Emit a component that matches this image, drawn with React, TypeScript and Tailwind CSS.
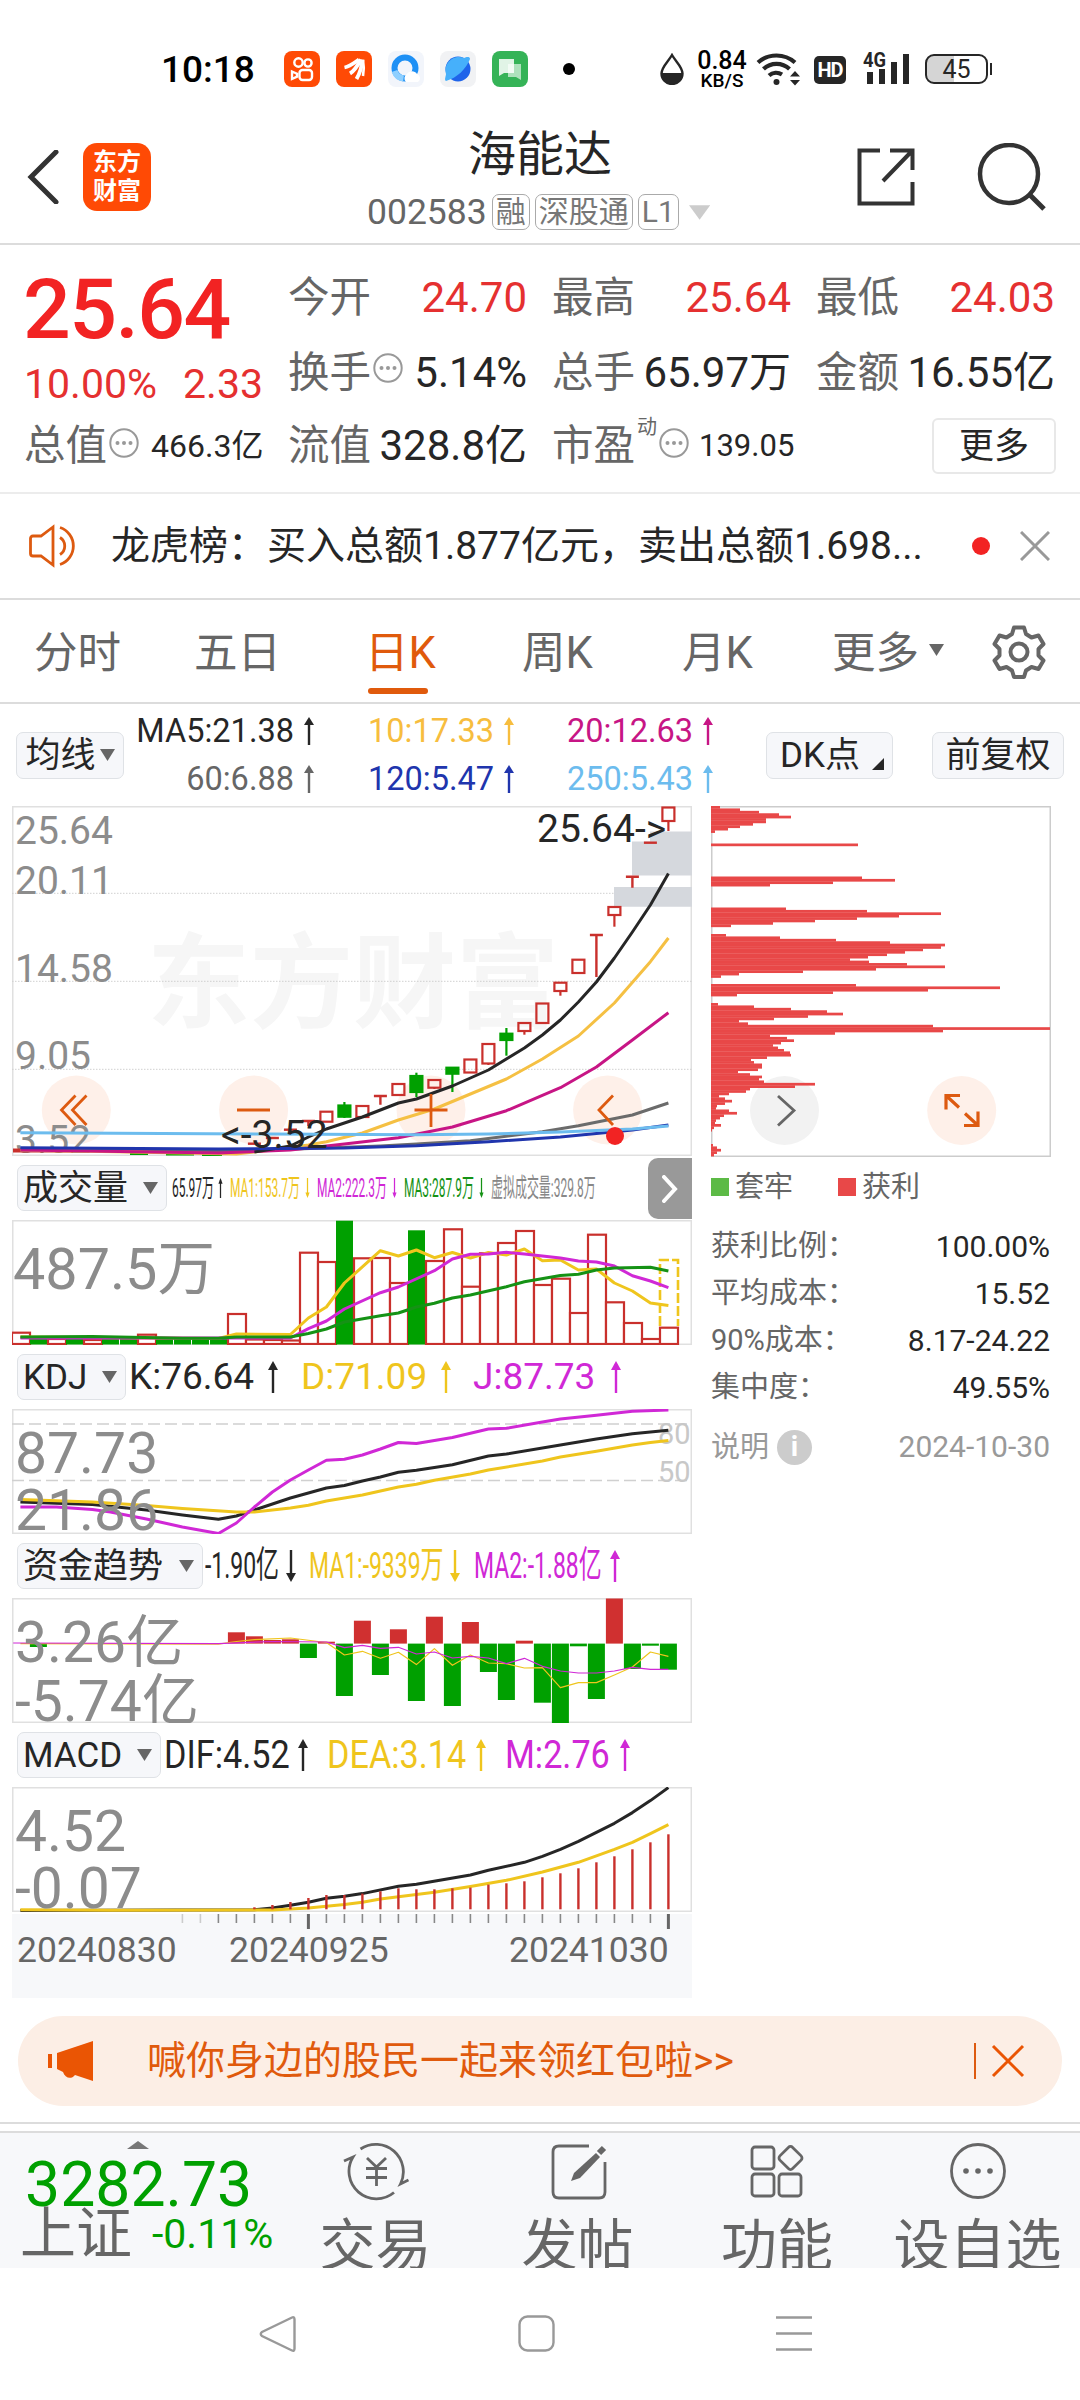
import type { ReactNode } from "react";

type Point = [number, number];

const RED = "#c9302c";
const GREEN = "#00a000";
const YELLOW = "#efc51d";
const PURPLE = "#d028d6";

// Centre of the i-th day inside a 680px wide panel
const cx = (i: number) => 8.4 + i * 18;
const toPoints = (pts: Point[]) => pts.map(([i, y]) => `${cx(i)},${y}`).join(" ");

// [day, body top, body bottom, high, low, up]
const CANDLES: [number, number, number, number, number, boolean][] = [
  [17, 305.7, 315.7, 305, 316, true],
  [18, 299.5, 310.7, 296, 312, false],
  [19, 300, 311, 300, 311, true],
  [21, 278, 289, 278, 290, true],
  [22, 270, 286, 266.7, 291, false],
  [23, 274, 281.7, 273, 283, true],
  [24, 261.7, 267.7, 261, 286, false],
  [25, 253.5, 266.5, 253, 267, true],
  [26, 238, 257.5, 238, 259, true],
  [27, 227.7, 234, 222, 249.7, false],
  [28, 217, 225, 217, 228.7, true],
  [29, 197.5, 217, 197, 217, true],
  [30, 176.7, 185, 176, 189.7, true],
  [31, 153.7, 167, 153, 167, true],
  [33, 101, 109, 100, 120.7, true],
  [36, 1.5, 15, 1, 25, true],
];

// Limit-up days drawn as a dash with an optional tail: [day, y, low]
const DASHES: [number, number, number][] = [
  [13, 337.7, 337.7],
  [14, 332, 332],
  [15, 323.7, 323.7],
  [16, 315, 320],
  [20, 290, 298.7],
  [32, 129, 171],
  [34, 70.7, 81.7],
  [35, 36.7, 36.7],
];

const MA_LINES: { color: string; pts: Point[] }[] = [
  { color: "#6b6b6b", pts: [[0, 344], [12, 345], [20, 340], [22, 338], [25, 334.7], [29, 325.7], [31, 319.7], [34, 309], [36, 297]] },
  { color: "#f5c043", pts: [[0, 344], [12, 348], [14, 344], [16, 339], [17, 335.7], [19, 327], [21, 314], [23, 303], [25, 288], [27, 273], [29, 253], [31, 230], [33, 197], [35, 155.7], [36, 132]] },
  { color: "#c71585", pts: [[0, 344], [11, 347], [15, 344], [18, 338], [21, 331.7], [24, 321], [27, 304.7], [30, 281.7], [32, 261], [34, 234], [36, 206.7]] },
  { color: "#262626", pts: [[13, 346], [15, 340], [16, 331], [17, 323], [19, 311], [21, 297], [22, 293], [24, 280], [26, 264], [28, 242], [29, 229], [30, 214], [31, 196], [32, 176], [33, 152], [34, 126], [35, 99], [36, 67.5]] },
  { color: "#2035ad", pts: [[0, 341.7], [11, 343], [18, 342], [22, 339.7], [26, 335.7], [30, 331], [34, 324], [36, 319]] },
  { color: "#6cbcee", pts: [[0, 326.7], [14, 328], [22, 328.7], [26, 328], [30, 326], [34, 323], [36, 320]] },
];

const VOLUME_TOPS = [
  112.7, 119, 119, 119, 120, 119, 119, 114.7, 119, 119, 119, 119, 94, 119.5, 120, 120.5, 32.7, 42, 0.7, 38.3, 38, 63, 10.3,
  41, 9.3, 66.7, 33.3, 23, 11, 65, 58.7, 93, 14.7, 82.3, 103, 119, 107.7,
];
const VOLUME_DOWN = [1, 3, 5, 6, 8, 9, 10, 11, 18, 22];

const VOLUME_LINES: { color: string; pts: Point[] }[] = [
  { color: YELLOW, pts: [[0, 117], [11, 118.5], [12, 114], [15, 114.5], [16, 98], [17, 87], [18, 63], [20, 30.7], [21, 36], [22, 30], [23, 37.7], [24, 32.5], [25, 38], [26, 32.5], [27, 35], [28, 29], [29, 40.7], [30, 40], [31, 50], [32, 49], [33, 63], [34, 71], [35, 83], [36, 85.5]] },
  { color: PURPLE, pts: [[0, 118], [15, 118], [16, 108.7], [17, 101], [18, 89], [20, 72.7], [21, 67], [23, 50.7], [24, 39], [25, 34.3], [26, 34], [27, 32.3], [28, 34], [30, 38], [31, 41], [32, 42], [33, 46], [34, 55.7], [35, 61], [36, 67.7]] },
  { color: "#159215", pts: [[0, 117], [4, 116.5], [9, 118.3], [11, 118.3], [12, 117], [15, 117], [16, 113.5], [17, 109], [18, 102], [20, 95.7], [21, 93], [22, 87], [23, 83.3], [24, 78], [25, 75], [27, 66.7], [28, 61.7], [30, 55.5], [31, 54.3], [32, 50], [33, 48], [35, 47.3], [36, 51]] },
];

const KDJ_LINES: { color: string; pts: Point[] }[] = [
  { color: "#262626", pts: [[0, 93], [4, 95.5], [7, 101], [9, 106], [11, 110.3], [12, 107], [13, 101], [15, 89], [17, 79], [18, 76.5], [19, 72], [20, 68], [21, 63.3], [22, 61.3], [24, 55.7], [26, 47], [27, 45], [30, 36], [32, 30], [34, 24.7], [36, 21.3]] },
  { color: YELLOW, pts: [[0, 90.5], [4, 93], [7, 96.5], [9, 99.5], [12, 103], [13, 103], [15, 99], [16, 96.3], [17, 92], [19, 86], [21, 78], [22, 75.3], [23, 71.3], [25, 65], [26, 61], [29, 52], [30, 48], [32, 42.3], [34, 36], [35, 33.6], [36, 31.6]] },
  { color: PURPLE, pts: [[0, 98], [2, 98], [4, 100.5], [5, 103], [7, 110], [9, 118], [11, 124.5], [12, 114], [13, 98], [14, 83], [15, 71], [16, 61], [17, 51.3], [18, 50.3], [19, 46], [20, 40], [21, 33.5], [22, 34.5], [24, 28.5], [26, 20], [27, 19.3], [29, 13], [30, 10], [32, 6.3], [34, 2.3], [36, 1]] },
];

// [day, end of bar], bars start at the zero line
const FLOW_BARS: Point[] = [
  [1, 49], [12, 34.3], [13, 38.3], [14, 42], [15, 41.3], [16, 60], [17, 43.7], [18, 98], [19, 22.7], [20, 77], [21, 31.3],
  [22, 103], [23, 18.7], [24, 108], [25, 24], [26, 74], [27, 102], [28, 42.7], [29, 104.7], [30, 125], [31, 48.3], [32, 101],
  [33, 0.5], [34, 71], [35, 47.7], [36, 71.7],
];
const FLOW_ZERO = 45.6;

const FLOW_LINES: { color: string; pts: Point[] }[] = [
  { color: YELLOW, pts: [[0, 45.6], [11, 46.2], [12, 43.5], [13, 41.6], [15, 40], [17, 44.5], [18, 57], [19, 53.3], [20, 60.3], [21, 54.3], [22, 66.6], [23, 50.6], [24, 67.3], [25, 57], [26, 65], [27, 65.7], [28, 70], [29, 69.7], [30, 89.6], [31, 84.6], [32, 84.6], [33, 77], [34, 69], [35, 54], [36, 58.3]] },
  { color: PURPLE, pts: [[-0.4, 45], [11, 45.6], [14, 43.5], [17, 44], [18, 49.6], [19, 47.3], [20, 50.3], [21, 49.3], [22, 56], [23, 54], [24, 60], [25, 58.3], [26, 60], [27, 65.6], [28, 60.3], [29, 68.3], [30, 73], [31, 75], [32, 75], [33, 73], [34, 69.3], [35, 71.3], [36, 71.3]] },
];

// MACD histogram from day 13 on
const MACD_TOPS = [
  120.3, 118, 115, 111, 108, 108, 106.6, 104.3, 101.3, 102.3, 102.3, 101.3, 100.6, 97.6, 96.3, 94.3, 90.3, 86.3, 81.3, 75.3,
  69.3, 62.3, 55.3, 47.3,
];
const MACD_LINES: { color: string; pts: Point[] }[] = [
  { color: "#262626", pts: [[0, 123.5], [13, 122.8], [14, 121], [15, 118.3], [16, 115.3], [17, 111.3], [18, 109.3], [19, 106.6], [21, 99.3], [22, 97.3], [25, 88], [26, 83.3], [28, 75.3], [29, 69.3], [30, 62.3], [31, 54.3], [32, 45.3], [33, 36.3], [34, 25.6], [35, 13.6], [36, 0.6]] },
  { color: YELLOW, pts: [[0, 122.8], [5, 123.3], [14, 123], [16, 121], [18, 117.5], [19, 115.3], [20, 112], [22, 107.6], [23, 105.3], [25, 99.6], [27, 93.3], [29, 85], [31, 75.3], [33, 62.3], [34, 55.3], [35, 46.6], [36, 37.6]] },
];

// Chip distribution, one width per price step
const CHIP_STEP = 2.42;
const CHIPS: { y: number; w: number[] }[] = [
  { y: 0, w: [9, 29, 48, 68, 80, 55, 55, 42, 29, 17, 4] },
  { y: 37.5, w: [147] },
  { y: 70.5, w: [151, 184, 122, 59] },
  { y: 101.5, w: [75, 156, 230, 188, 146, 104, 62, 20] },
  { y: 128, w: [15, 69, 125, 179, 234, 230, 212, 194, 176, 157, 139, 158, 196, 234, 165, 92, 28, 10] },
  { y: 178, w: [145, 289, 217, 122, 26] },
  { y: 197, w: [7, 43, 80, 116, 132, 97, 63, 28, 37, 222, 339, 232, 124, 59, 76, 83, 70, 62, 67, 73, 79, 80, 56, 40, 43, 51, 51, 47, 27, 39, 51, 48, 53, 104, 84, 39, 35, 18, 8, 14, 21, 14, 6, 5, 18, 26, 13, 9, 5, 4, 10, 3, 1] },
  { y: 338, w: [2, 6, 10, 6, 3] },
];

function Lines({ lines, width = 3 }: { lines: { color: string; pts: Point[] }[]; width?: number }) {
  return (
    <>
      {lines.map((l, idx) => (
        <polyline key={idx} points={toPoints(l.pts)} fill="none" stroke={l.color} strokeWidth={width} strokeLinejoin="round" />
      ))}
    </>
  );
}

function Panel({ height, children }: { height: number; children: ReactNode }) {
  return (
    <svg width="680" height={height} viewBox={`0 0 680 ${height}`} className="block shrink-0">
      <rect x="0.75" y="0.75" width="678.5" height={height - 1.5} fill="#fff" stroke="#e0e0e0" strokeWidth="1.5" />
      {children}
    </svg>
  );
}

function Caret({ className = "" }: { className?: string }) {
  return (
    <svg width="15" height="12" viewBox="0 0 15 12" className={`shrink-0 ${className}`}>
      <path d="M0 0h15L7.500 12z" fill="#666" />
    </svg>
  );
}

function Arrow({ down = false, className = "", small = false }: { down?: boolean; className?: string; small?: boolean }) {
  return (
    <svg
      width={small ? 5 : 12}
      height={small ? 20 : 32}
      viewBox="0 0 12 32"
      preserveAspectRatio="none"
      className={`shrink-0 ${down ? "rotate-180" : ""} ${className}`}
    >
      <path d="M6 3v29" stroke="currentColor" strokeWidth={small ? 3 : 2.4} />
      <path d="M6 0l5 9H1z" fill="currentColor" />
    </svg>
  );
}

function Dots({ className = "" }: { className?: string }) {
  return (
    <svg width="30" height="30" viewBox="0 0 30 30" className={`shrink-0 ${className}`}>
      <circle cx="15" cy="15" r="13.7" fill="none" stroke="#999" strokeWidth="2" />
      <circle cx="8.500" cy="15" r="2" fill="#999" />
      <circle cx="15" cy="15" r="2" fill="#999" />
      <circle cx="21.500" cy="15" r="2" fill="#999" />
    </svg>
  );
}

function StatusBar() {
  return (
    <div className="flex h-[138px] items-start pl-[161px] pt-[51px]">
      <div className="w-[123px] pt-[1px] text-[37px] leading-[36px] font-medium text-black">10:18</div>
      <div className="flex gap-4">
        <svg width="36" height="36" viewBox="0 0 36 36">
          <rect width="36" height="36" rx="8" fill="#ff4a05" />
          <g fill="none" stroke="#fff" strokeWidth="2.4">
            <circle cx="14.500" cy="11.500" r="4.200" />
            <circle cx="24" cy="12" r="3.600" />
            <rect x="15.500" y="19" width="12.500" height="10" rx="3" />
            <path d="M8 20.500v7.500l5-2.300v-3z" />
          </g>
        </svg>
        <svg width="36" height="36" viewBox="0 0 36 36">
          <rect width="36" height="36" rx="8" fill="#ff4a05" />
          <g fill="none" stroke="#fff" strokeWidth="3.800">
            <path d="M8.500 16.500C14 15.500 18 12 23 8.500" />
            <path d="M14 22.500C19 19.500 22 14 25 8.500" />
            <path d="M20.500 28C24 22 26 15 26.500 8.500" />
            <path d="M27 25c1-5 1-11 0-16" strokeWidth="2.600" />
          </g>
        </svg>
        <svg width="36" height="36" viewBox="0 0 36 36">
          <rect width="36" height="36" rx="8" fill="#f2f5fb" />
          <circle cx="17" cy="17" r="10.500" fill="none" stroke="#1e90f5" strokeWidth="6" />
          <path d="M6.500 20a11 11 0 0 0 9 7.500" fill="none" stroke="#8fd0ff" strokeWidth="6" />
          <path d="M18 31a5 5 0 0 1 1-8 6 6 0 0 1 10 0 4.500 4.500 0 0 1 1 8z" fill="#fff" />
        </svg>
        <svg width="36" height="36" viewBox="0 0 36 36">
          <rect width="36" height="36" rx="8" fill="#f1f2f4" />
          <circle cx="18" cy="18" r="12.500" fill="#1f64ea" />
          <path d="M6 30c-2-1 0-5 0-7-3-11 8-20 18-16 2-1 6-2 6 1-4 10-13 19-24 22z" fill="#46b0fb" />
        </svg>
        <svg width="36" height="36" viewBox="0 0 36 36">
          <rect width="36" height="36" rx="8" fill="#35b357" />
          <path d="M16 13h13v16l-5-3h-8z" fill="#fff" opacity="0.6" />
          <path d="M7 8h15v14H12l-5 3z" fill="#fff" opacity="0.85" />
        </svg>
      </div>
      <div className="mt-3 ml-[35px] h-3 w-3 rounded-full bg-black" />
      <svg width="24" height="32" viewBox="0 0 24 32" className="mt-[2px] ml-[85px]">
        <path d="M12 2C8 9 1.500 14 1.500 20.500a10.500 10.500 0 0 0 21 0C22.500 14 16 9 12 2z" fill="none" stroke="#262626" strokeWidth="2.400" />
        <path d="M1.500 20h21a10.500 10.500 0 0 1-21 0z" fill="#262626" />
      </svg>
      <div className="ml-[12px] w-[52px] text-center font-medium text-black">
        <div className="text-[25px] leading-[20px]">0.84</div>
        <div className="text-[19px] leading-[20px]">KB/S</div>
      </div>
      <svg width="45" height="34" viewBox="0 0 45 34" className="mt-[1px] ml-[8px]">
        <g fill="none" stroke="#262626" strokeWidth="4.200">
          <path d="M2 10.500a28 28 0 0 1 37 0" />
          <path d="M7.500 17a19 19 0 0 1 26 0" />
          <path d="M13 23.500a11 11 0 0 1 13 -1" />
        </g>
        <circle cx="20.500" cy="30" r="3" fill="#262626" />
        <path d="M34 24.500l5-5.500 5 5.500zM34 28l5 5.500 5-5.500z" fill="#262626" />
      </svg>
      <div className="mt-[5px] ml-[13px] flex h-7 w-8 items-center justify-center rounded-[5px] bg-[#262626] text-[20px] leading-none font-bold tracking-tighter text-white">
        HD
      </div>
      <svg width="48" height="34" viewBox="0 0 48 34" className="ml-[17px]">
        <text x="0" y="16" fontSize="20" fontWeight="700" fill="#262626" textLength="23" lengthAdjust="spacingAndGlyphs">
          4G
        </text>
        <path d="M7 21v12M19 18v15M31 11v22M43 3v30" stroke="#262626" strokeWidth="6" />
      </svg>
      <div className="mt-[3px] ml-[14px] flex items-center">
        <div className="flex h-[30px] w-[63px] items-center justify-center rounded-[9px] border-2 border-[#262626] bg-linear-to-r from-[#d5d5d5] from-45% to-white to-45% text-[25px] leading-none text-[#262626]">
          45
        </div>
        <div className="ml-[2px] h-3 w-[2px] bg-[#262626]" />
      </div>
    </div>
  );
}

function Badge({ children }: { children: ReactNode }) {
  return (
    <span className="flex h-9 items-center rounded-[7px] border-[1.5px] border-[#aaa] px-[3px] text-[30px] leading-none text-[#777]">
      {children}
    </span>
  );
}

function Header() {
  return (
    <header className="flex h-[107px] items-start border-b-2 border-[#dcdcdc] pl-[27px]">
      <svg width="32" height="54" viewBox="0 0 32 54" className="mt-[12px]">
        <path d="M29 2L4 27l25 25" fill="none" stroke="#333" strokeWidth="5" strokeLinecap="round" />
      </svg>
      <div className="mt-[5px] ml-[24px] flex h-[68px] w-[68px] flex-col items-center justify-center rounded-[14px] bg-[#ff4a05] text-[24px] leading-[29px] font-bold text-white">
        <span>东方</span>
        <span>财富</span>
      </div>
      <div className="ml-[216px] w-[343px]">
        <h1 className="-mt-[7px] ml-[101px] text-[48px] leading-[48px] text-[#262626]">海能达</h1>
        <div className="mt-[15px] flex items-center gap-[5px] whitespace-nowrap">
          <span className="text-[35.5px] leading-9 text-[#666]">002583</span>
          <Badge>融</Badge>
          <Badge>深股通</Badge>
          <Badge>L1</Badge>
          <svg width="22" height="15" viewBox="0 0 22 15" className="ml-[5px]">
            <path d="M0 0h22L11 15z" fill="#ccc" />
          </svg>
        </div>
      </div>
      <svg width="58" height="58" viewBox="0 0 58 58" className="mt-[10px] ml-[147px]">
        <path d="M23 2.500H2.500v53h53V34M33 2.500h22.500V22M54 4L26 33" fill="none" stroke="#333" strokeWidth="4" />
      </svg>
      <svg width="70" height="70" viewBox="0 0 70 70" className="mt-[5px] ml-[62px]">
        <circle cx="32" cy="31" r="29" fill="none" stroke="#333" strokeWidth="4.500" />
        <path d="M53 52l14 14" stroke="#333" strokeWidth="5" />
      </svg>
    </header>
  );
}

function Quote({ label, value, up = false, extra }: { label: string; value: string; up?: boolean; extra?: ReactNode }) {
  return (
    <div className="flex w-[239px] items-center justify-between">
      <div className="flex items-center">
        <span className="text-[41.5px] leading-none text-[#666]">{label}</span>
        {extra}
      </div>
      <span className={`text-[42px] leading-none ${up ? "text-[#e53030]" : "text-[#262626]"}`}>{value}</span>
    </div>
  );
}

function QuotePanel() {
  return (
    <section className="h-[249px] border-b-2 border-[#ececec] pt-[20px] pl-[24px] whitespace-nowrap">
      <div className="flex">
        <div className="w-[264px]">
          <div className="-ml-[1px] pt-[2px] text-[84px] leading-[86px] font-medium tracking-[-1.5px] text-[#f22323]">25.64</div>
          <div className="mt-[10px] flex w-[239px] justify-between text-[41px] leading-[42px] text-[#e53030]">
            <span>10.00%</span>
            <span>2.33</span>
          </div>
        </div>
        <div className="grid grid-cols-[239px_239px_239px] grid-rows-[65px_85px] gap-x-[25px]">
          <Quote label="今开" value="24.70" up />
          <Quote label="最高" value="25.64" up />
          <Quote label="最低" value="24.03" up />
          <Quote label="换手" value="5.14%" extra={<Dots className="mb-[10px] ml-[2px]" />} />
          <Quote label="总手" value="65.97万" />
          <Quote label="金额" value="16.55亿" />
        </div>
      </div>
      <div className="mt-[3px] flex h-[56px] items-center">
        <div className="flex w-[264px] items-center">
          <span className="text-[41.5px] leading-none text-[#666]">总值</span>
          <Dots className="mb-[6px] ml-[2px]" />
          <span className="ml-[12px] text-[32px] text-[#262626]">466.3亿</span>
        </div>
        <Quote label="流值" value="328.8亿" />
        <div className="ml-[25px] flex w-[380px] items-center">
          <span className="text-[41.5px] leading-none text-[#666]">市盈</span>
          <span className="mb-[38px] ml-[2px] text-[20px] leading-none text-[#666]">动</span>
          <Dots className="mb-[6px] ml-[2px]" />
          <span className="ml-[10px] text-[31px] text-[#262626]">139.05</span>
        </div>
        <button className="h-[56px] w-[124px] rounded-[6px] border-2 border-[#e8e8e8] text-[35px] leading-none text-[#262626]">更多</button>
      </div>
    </section>
  );
}

function Notice() {
  return (
    <div className="flex h-[106px] items-center border-b-2 border-[#dcdcdc] pl-[28px]">
      <svg width="54" height="44" viewBox="0 0 54 44" fill="none" stroke="#dd5a10" strokeWidth="2.800">
        <path d="M25 3L13 12H5q-2.500 0-2.500 2.500v15q0 2.500 2.500 2.500h8l12 9z" />
        <path d="M32 13.500a10 10 0 0 1 0 17M32 3.500a19.500 19.500 0 0 1 0 37" />
      </svg>
      <p className="ml-[29px] w-[861px] text-[39px] leading-none whitespace-nowrap text-[#262626]">
        龙虎榜：买入总额1.877亿元，卖出总额1.698...
      </p>
      <div className="h-[18px] w-[18px] rounded-full bg-[#f22323]" />
      <svg width="30" height="30" viewBox="0 0 30 30" className="ml-[30px]">
        <path d="M1 1l28 28M29 1L1 29" stroke="#999" strokeWidth="3" />
      </svg>
    </div>
  );
}

function Tabs() {
  return (
    <nav className="flex h-[104px] items-center border-b-2 border-[#dcdcdc] pt-[6px] pl-[34px] text-[43.5px] leading-none whitespace-nowrap text-[#666]">
      <span className="w-[160px]">分时</span>
      <span className="w-[171px]">五日</span>
      <span className="relative w-[157px] text-[#e05a0c]">
        日K
        <i className="absolute top-[56px] left-[3px] h-[6px] w-[60px] rounded-full bg-[#e05a0c]" />
      </span>
      <span className="w-[160px]">周K</span>
      <span className="w-[150px]">月K</span>
      <span>更多</span>
      <Caret className="mb-[8px] ml-[10px]" />
      <svg width="54" height="54" viewBox="0 0 54 54" className="mb-[5px] ml-[48px]" fill="none" stroke="#666" strokeWidth="4">
        <path
          d="M22 2.500h10l2 6.500 5.500 3.500 7-2 5 8.500-5 5v6.500l5 5-5 8.500-7-2-5.500 3.500-2 6.500H22l-2-6.500-5.500-3.500-7 2-5-8.500 5-5V24l-5-5 5-8.500 7 2L20 9z"
          strokeLinejoin="round"
        />
        <circle cx="27" cy="27" r="8.500" />
      </svg>
    </nav>
  );
}

const MA_LEGEND = [
  { top: "MA5:21.38", bottom: "60:6.88", cls: "w-[172px] items-end", topCls: "text-[#262626]", bottomCls: "text-[#666]" },
  { top: "10:17.33", bottom: "120:5.47", cls: "ml-[56px] w-[144px]", topCls: "text-[#f7bd3e]", bottomCls: "text-[#2035ad]" },
  { top: "20:12.63", bottom: "250:5.43", cls: "ml-[55px] w-[199px]", topCls: "text-[#c71585]", bottomCls: "text-[#6cbcee]" },
];

function MaRow() {
  return (
    <div className="flex h-[102px] items-center pl-4 whitespace-nowrap">
      <button className="flex h-[47px] w-[108px] items-center justify-center gap-[4px] rounded-[7px] border border-[#dfe2e6] bg-[#f6f7fa] text-[35px] leading-none text-[#262626]">
        均线
        <Caret />
      </button>
      <div className="ml-[16px] flex text-[32.5px] leading-[48px]">
        {MA_LEGEND.map((m) => (
          <div key={m.top} className={`flex flex-col ${m.cls}`}>
            <span className={`flex items-center ${m.topCls}`}>
              {m.top}
              <Arrow className="mr-[-3px] ml-[9px] h-7" />
            </span>
            <span className={`flex items-center ${m.bottomCls}`}>
              {m.bottom}
              <Arrow className="mr-[-3px] ml-[9px] h-7" />
            </span>
          </div>
        ))}
      </div>
      <button className="flex h-[47px] w-[127px] items-center rounded-[7px] border border-[#dfe2e6] bg-[#f6f7fa] pl-[13px] text-[35px] leading-none text-[#262626]">
        DK点
        <svg width="12" height="12" viewBox="0 0 12 12" className="mt-[18px] ml-[12px]">
          <path d="M12 0v12H0z" fill="#262626" />
        </svg>
      </button>
      <button className="ml-[39px] h-[47px] w-[132px] rounded-[7px] border border-[#dfe2e6] bg-[#f6f7fa] text-[35px] leading-none text-[#262626]">
        前复权
      </button>
    </div>
  );
}

const AXIS_LABELS: [string, number][] = [
  ["25.64", 38],
  ["20.11", 88],
  ["14.58", 176],
  ["9.05", 262.7],
  ["3.52", 346.7],
];

function CandleChart() {
  return (
    <Panel height={350}>
      <text x="135" y="214" fontSize="103" fontWeight="700" fill="#f6f6f6">
        东方财富
      </text>
      {[87.3, 175.3, 263.3].map((y) => (
        <path key={y} d={`M0 ${y}h680`} stroke="#d0d0d0" strokeWidth="1" strokeDasharray="1.500 1.500" />
      ))}
      <path d="M638 25.500h42v44h-60v-34h18zM602 81h78v19.700h-78z" fill="#d5d8dd" />
      {[64.3, 241.6, 419, 595.6].map((x) => (
        <circle key={x} cx={x} cy="304" r="34.500" fill="#fef0e9" />
      ))}
      {AXIS_LABELS.map(([t, y]) => (
        <text key={t} x="3" y={y} fontSize="39" fill="#8c8c8c">
          {t}
        </text>
      ))}
      <path d="M1 344.500h60" stroke={RED} strokeWidth="4" />
      <path d="M118 348h18M154 348.500h28M190 349h20" stroke={GREEN} strokeWidth="2" />
      {CANDLES.map(([i, top, bottom, high, low, up]) => (
        <g key={i} stroke={up ? RED : GREEN} strokeWidth="2.200">
          <path d={up ? `M${cx(i)} ${bottom}V${low}` : `M${cx(i)} ${high}V${low}`} />
          <rect x={cx(i) - 6} y={top} width="12" height={bottom - top} fill={up ? "none" : GREEN} />
        </g>
      ))}
      {DASHES.map(([i, y, low]) => (
        <path key={i} d={`M${cx(i) - 6.5} ${y}h13M${cx(i)} ${y}V${low}`} stroke={RED} strokeWidth="2.400" />
      ))}
      <Lines lines={MA_LINES} />
      <text x="525" y="36" fontSize="39" fill="#262626">
        {"25.64->"}
      </text>
      <text x="209" y="341.500" fontSize="39" fill="#262626">
        {"<-3.52"}
      </text>
      <path
        d="M63.500 289.500L49.500 304l14 15M74.500 289.500L60.500 304l14 15M225 304h33M402.500 304h33M419 288v33M601 289.500L587 304l14 15"
        fill="none"
        stroke="#dd5a10"
        strokeWidth="2.800"
      />
      <circle cx="603" cy="330" r="9" fill="#f22323" />
    </Panel>
  );
}

type Reading = { text: string; cell: string; down?: boolean; noArrow?: boolean; color: string };

function IndicatorRow({
  name,
  button,
  readings,
  size,
  text = "",
  small = false,
}: {
  name: string;
  button: string;
  readings: Reading[];
  size: string;
  text?: string;
  small?: boolean;
}) {
  return (
    <div className="flex h-[64px] items-center pl-[5px] whitespace-nowrap">
      <button className={`flex h-[46px] shrink-0 items-center justify-between rounded-[7px] border border-[#dfe2e6] bg-[#f6f7fa] pr-[8px] pl-[5px] text-[35px] leading-none text-[#262626] ${button}`}>
        {name}
        <Caret />
      </button>
      {readings.map((r) => (
        <div key={r.text} className={`flex shrink-0 items-center ${r.color} ${r.cell}`}>
          <div className={`w-0 grow ${size}`}>
            <span className={`inline-block origin-left ${text}`}>{r.text}</span>
          </div>
          {!r.noArrow && <Arrow down={r.down} small={small} />}
        </div>
      ))}
    </div>
  );
}

function VolumeChart() {
  return (
    <Panel height={125}>
      {VOLUME_TOPS.map((top, i) =>
        VOLUME_DOWN.includes(i) ? (
          <rect key={i} x={cx(i) - 8.4} y={top} width="17" height={124.5 - top} fill={GREEN} />
        ) : (
          <rect key={i} x={cx(i) - 8.4} y={top} width="18" height={124 - top} fill="#fff" stroke={RED} strokeWidth="2.200" />
        ),
      )}
      <path d={`M${cx(36) - 8.4} 106V40h18v66`} fill="none" stroke={YELLOW} strokeWidth="2.600" strokeDasharray="10 3" />
      <Lines lines={VOLUME_LINES} />
      <text x="1" y="69" fontSize="57.500" fill="#8c8c8c">
        487.5万
      </text>
    </Panel>
  );
}

function KdjChart() {
  return (
    <Panel height={125}>
      <path d="M0 15h680M0 71.600h680" stroke="#d0d0d0" strokeWidth="1.500" strokeDasharray="12 5" />
      <text x="646" y="35" fontSize="29" fill="#c8c8c8">
        80
      </text>
      <text x="646" y="72.500" fontSize="29" fill="#c8c8c8">
        50
      </text>
      <Lines lines={KDJ_LINES} />
      <text x="3" y="63.600" fontSize="57" fill="#8c8c8c">
        87.73
      </text>
      <text x="3" y="120.600" fontSize="57" fill="#8c8c8c">
        21.86
      </text>
    </Panel>
  );
}

function FlowChart() {
  return (
    <Panel height={125}>
      {FLOW_BARS.map(([i, end]) => (
        <rect
          key={i}
          x={cx(i) - 8.5}
          y={Math.min(end, FLOW_ZERO)}
          width="17"
          height={Math.abs(end - FLOW_ZERO)}
          fill={end < FLOW_ZERO ? "#d03030" : GREEN}
        />
      ))}
      <Lines lines={FLOW_LINES} width={1.2} />
      <text x="3" y="64" fontSize="57" fill="#8c8c8c">
        3.26亿
      </text>
      <text x="3" y="123" fontSize="57" fill="#8c8c8c">
        -5.74亿
      </text>
    </Panel>
  );
}

function MacdChart() {
  return (
    <Panel height={125}>
      <Lines lines={MACD_LINES} />
      {MACD_TOPS.map((top, n) => (
        <path key={n} d={`M${cx(13 + n)} ${top}V122.300`} stroke={RED} strokeWidth="2.400" />
      ))}
      <text x="3" y="64" fontSize="57" fill="#8c8c8c">
        4.52
      </text>
      <text x="3" y="121" fontSize="57" fill="#8c8c8c">
        -0.07
      </text>
    </Panel>
  );
}

function DateAxis() {
  const days = Array.from({ length: 28 }, (_, n) => n + 9);
  return (
    <div className="mt-[2px] h-[84px] bg-[#f7f8fa]">
      <svg width="680" height="15" viewBox="0 0 680 15" className="block">
        {days.map((i) => {
          const major = i === 16 || i === 36;
          return (
            <path
              key={i}
              d={`M${cx(i)} 0v${major ? 15 : 9}`}
              stroke={i < 11 ? "#ccc" : major ? "#666" : "#888"}
              strokeWidth={major ? 3 : 1.6}
            />
          );
        })}
      </svg>
      <div className="flex pl-[5px] text-[35.5px] leading-[42px] text-[#666]">
        <span className="w-[212px]">20240830</span>
        <span className="w-[280px]">20240925</span>
        <span>20241030</span>
      </div>
    </div>
  );
}

const CHIP_STATS = [
  ["获利比例：", "100.00%"],
  ["平均成本：", "15.52"],
  ["90%成本：", "8.17-24.22"],
  ["集中度：", "49.55%"],
];

function ChipPanel() {
  return (
    <aside className="ml-[19px] w-[339px]">
      <svg width="340" height="351" viewBox="0 0 340 351" className="block">
        <rect x="0.750" y="0.750" width="338.500" height="349.500" fill="#fff" stroke="#ccc" strokeWidth="1.500" />
        <circle cx="73.500" cy="304.500" r="34.500" fill="#f2f2f2" />
        {CHIPS.map((g) => g.w.map((w, n) => <rect key={`${g.y}-${n}`} x="0" y={g.y + n * CHIP_STEP} width={w} height={CHIP_STEP + 0.3} fill="#e84848" />))}
        <path d="M67 290l16 14.500L67 319.500" fill="none" stroke="#666" strokeWidth="2.800" />
        <circle cx="250.700" cy="304.500" r="34.500" fill="#fef0e9" />
        <path d="M249 289.500h-14v14M235 289.500l13 12M253 319.500h14v-14M267 319.500l-13-12" fill="none" stroke="#dd5a10" strokeWidth="3.200" />
      </svg>
      <div className="flex h-[60px] items-center text-[29px] leading-none text-[#666]">
        <i className="h-[18px] w-[18px] bg-[#5cba46]" />
        <span className="ml-[6px] w-[103px]">套牢</span>
        <i className="h-[18px] w-[18px] bg-[#e84848]" />
        <span className="ml-[6px]">获利</span>
      </div>
      <div className="mt-[6px]">
        {CHIP_STATS.map(([label, value]) => (
          <div key={label} className="flex h-[47px] items-center justify-between text-[30px] leading-none whitespace-nowrap">
            <span className="text-[29px] text-[#666]">{label}</span>
            <span className="text-[#262626]">{value}</span>
          </div>
        ))}
      </div>
      <div className="mt-[10px] flex h-[52px] items-center text-[29px] leading-none text-[#999]">
        <span>说明</span>
        <span className="ml-[8px] flex h-[35px] w-[35px] items-center justify-center rounded-full bg-[#ccc] text-[28px] font-bold text-white">i</span>
        <span className="ml-auto text-[30px]">2024-10-30</span>
      </div>
    </aside>
  );
}

function Charts() {
  return (
    <section className="flex h-[1210px] pl-3">
      <div className="w-[680px] shrink-0">
        <CandleChart />
        <div className="relative">
          <IndicatorRow
            name="成交量"
            button="w-[150px]"
            size="text-[26px]"
            text="scale-x-[.46]"
            small
            readings={[
              { text: "65.97万", cell: "ml-[5px] w-[51px]", color: "text-[#262626]" },
              { text: "MA1:153.7万", cell: "ml-[7px] w-[80px]", down: true, color: "text-[#efc51d]" },
              { text: "MA2:222.3万", cell: "ml-[7px] w-[80px]", down: true, color: "text-[#d028d6]" },
              { text: "MA3:287.9万", cell: "ml-[7px] w-[80px]", down: true, color: "text-[#159215]" },
              { text: "虚拟成交量:329.8万", cell: "ml-[7px] w-[110px]", noArrow: true, color: "text-[#888]" },
            ]}
          />
          {/* side panel toggle */}
          <div className="absolute top-[2px] right-0 flex h-[61px] w-[44px] items-center justify-center rounded-l-[10px] bg-[#999]">
            <svg width="16" height="28" viewBox="0 0 16 28">
              <path d="M2 2l11 12L2 26" fill="none" stroke="#fff" strokeWidth="4" strokeLinecap="round" />
            </svg>
          </div>
        </div>
        <VolumeChart />
        <IndicatorRow
          name="KDJ"
          button="w-[109px]"
          size="text-[37px]"
          readings={[
            { text: "K:76.64", cell: "ml-[3px] w-[150px]", color: "text-[#262626]" },
            { text: "D:71.09", cell: "ml-[22px] w-[151px]", color: "text-[#efc51d]" },
            { text: "J:87.73", cell: "ml-[21px] w-[149px]", color: "text-[#d028d6]" },
          ]}
        />
        <KdjChart />
        <IndicatorRow
          name="资金趋势"
          button="w-[186px]"
          size="text-[37px]"
          text="scale-x-[.62]"
          readings={[
            { text: "-1.90亿", cell: "ml-[2px] w-[92px]", down: true, color: "text-[#262626]" },
            { text: "MA1:-9339万", cell: "ml-[12px] w-[152px]", down: true, color: "text-[#efc51d]" },
            { text: "MA2:-1.88亿", cell: "ml-[13px] w-[147px]", color: "text-[#d028d6]" },
          ]}
        />
        <FlowChart />
        <IndicatorRow
          name="MACD"
          button="w-[144px]"
          size="text-[38px]"
          text="scale-x-[.9]"
          readings={[
            { text: "DIF:4.52", cell: "ml-[3px] w-[145px]", color: "text-[#262626]" },
            { text: "DEA:3.14", cell: "ml-[18px] w-[160px]", color: "text-[#efc51d]" },
            { text: "M:2.76", cell: "ml-[18px] w-[126px]", color: "text-[#d028d6]" },
          ]}
        />
        <MacdChart />
        <DateAxis />
      </div>
      <ChipPanel />
    </section>
  );
}

function Banner() {
  return (
    <div className="mx-[18px] flex h-[90px] items-center rounded-full bg-[#fceee5] pl-[30px] text-[#e05a0c]">
      <svg width="46" height="40" viewBox="0 0 46 40" fill="#ea5504">
        <path d="M0 13h4v14H0zM9 12L45 0v40l-18-6c-4 5-10 3-12-3l-6-3z" />
      </svg>
      <span className="ml-[53px] w-[827px] text-[39px] leading-none whitespace-nowrap">{"喊你身边的股民一起来领红包啦>>"}</span>
      <i className="h-9 w-[1.5px] bg-[#dd5a10]" />
      <svg width="34" height="34" viewBox="0 0 34 34" className="ml-[15px]">
        <path d="M2 2l30 30M32 2L2 32" stroke="#ea5504" strokeWidth="3" />
      </svg>
    </div>
  );
}

function BottomItem({ label, className, children }: { label: string; className: string; children: ReactNode }) {
  return (
    <div className={`flex shrink-0 flex-col items-center ${className}`}>
      <svg width="66" height="60" viewBox="0 0 66 60" className="mt-[8px] shrink-0" fill="none" stroke="#666" strokeWidth="2.800">
        {children}
      </svg>
      <span className="mt-[17px] shrink-0 text-[56px] leading-[56px] whitespace-nowrap text-[#666]">{label}</span>
    </div>
  );
}

function BottomBar() {
  return (
    <footer className="mt-[16px] border-t-2 border-[#dcdcdc] pt-[7px]">
      <div className="flex h-[137px] overflow-hidden border-t-2 border-[#dcdcdc] bg-[#f7f8fa]">
        <div className="w-[275px] shrink-0 pl-[20px] whitespace-nowrap">
          <svg width="22" height="8" viewBox="0 0 22 8" className="mt-[8px] ml-[107px] block">
            <path d="M11 0l11 8H0z" fill="#777" />
          </svg>
          <div className="mt-[6px] ml-[5px] text-[62.5px] leading-[60px] text-[#00a000]">3282.73</div>
          <div className="-mt-[9px] flex items-center">
            <span className="text-[56px] leading-[56px] text-[#666]">上证</span>
            <span className="ml-[20px] text-[41px] leading-none text-[#00a000]">-0.11%</span>
          </div>
        </div>
        <BottomItem label="交易" className="w-[201px]">
          <path d="M17.500 8a27.500 27.500 0 0 1 40 35l8-4M51 51.500a27.500 27.500 0 0 1-41-35.500l-9 4" />
          <path d="M24 17l9.500 9 9.500-9M23 27.500h21M23 36.500h21M33.500 27v18" />
        </BottomItem>
        <BottomItem label="发帖" className="w-[203px]">
          <path d="M44 5H14q-6 0-6 6v40q0 6 6 6h40q6 0 6-6V21" />
          <path d="M26 40l3-8 22-20 4 4-20 21z" fill="#666" stroke="none" />
          <path d="M54 12l5-5" strokeWidth="6" />
        </BottomItem>
        <BottomItem label="功能" className="w-[196px]">
          <rect x="8" y="6" width="22" height="22" rx="3" />
          <rect x="8" y="33" width="22" height="22" rx="3" />
          <rect x="35" y="33" width="22" height="22" rx="3" />
          <rect x="37.500" y="8" width="18" height="18" rx="3" transform="rotate(45 46.500 17)" />
        </BottomItem>
        <BottomItem label="设自选" className="w-[205px]">
          <circle cx="33" cy="30" r="26.500" />
          <g fill="#666" stroke="none">
            <circle cx="21" cy="30" r="2.800" />
            <circle cx="33" cy="30" r="2.800" />
            <circle cx="45" cy="30" r="2.800" />
          </g>
        </BottomItem>
      </div>
      <div className="flex h-[131px] items-center pl-[259px]">
        <svg width="553" height="38" viewBox="0 0 553 38" fill="none" stroke="#999" strokeWidth="2.400">
          <path d="M33 2.500q2.500-1 2.500 2v29q0 3-2.500 2L3 21q-2.500-2 0-4z" />
          <rect x="260.500" y="1.500" width="34" height="34" rx="8" />
          <path d="M517 2.500h36M517 18.500h36M517 34.500h36" />
        </svg>
      </div>
    </footer>
  );
}

export default function App() {
  return (
    <div className="h-[2400px] w-[1080px] overflow-hidden bg-white font-['Roboto','Noto_Sans_CJK_SC',sans-serif]">
      <StatusBar />
      <Header />
      <QuotePanel />
      <Notice />
      <Tabs />
      <MaRow />
      <Charts />
      <Banner />
      <BottomBar />
    </div>
  );
}
